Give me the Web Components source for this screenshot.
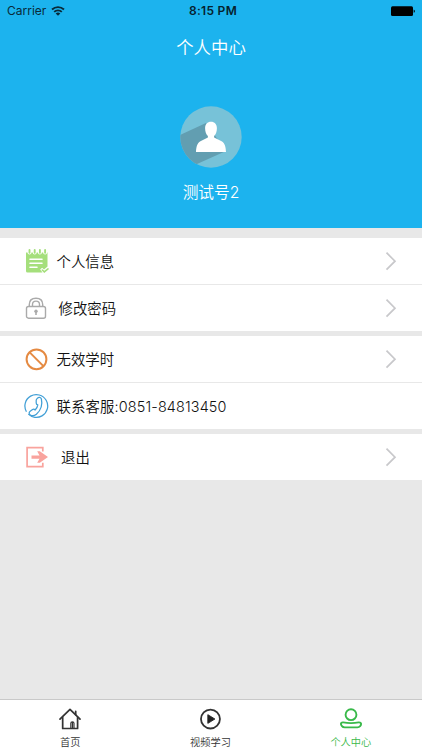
<!DOCTYPE html>
<html lang="zh-CN">
<head>
<meta charset="UTF-8">
<meta name="viewport" content="width=device-width, initial-scale=1.0">
<title>个人中心</title>
<style>
  body {
    margin: 0;
    background: #e8e8e8;
    font-family: Inter, "Noto Sans CJK SC", sans-serif;
    color: #111;
  }
</style>
</head>
<body>
<profile-page></profile-page>

<script>
const icons = {
  note: `<svg width="24" height="26" viewBox="0 0 24 26">
    <path d="M1 4.500h1.500a2 2 0 0 0 4 0h1.200a2 2 0 0 0 4 0h1.200a2 2 0 0 0 4 0h1.200a2 2 0 0 0 4 0h.4v14l-3.500 3-1.900-1.700-1.900 1.700 2.300 3.100H2.500A1.500 1.500 0 0 1 1 23.100z" fill="#a5df7c"/>
    <path d="M4.500 2v2.800M9.700 2v2.800M14.900 2v2.800M20.100 2v2.800" stroke="#a5df7c" stroke-width="1.900" stroke-linecap="round"/>
    <path d="M5 11.300h12M5 15.300h12M5 19.300h7" stroke="#fff" stroke-width="1.600" stroke-linecap="round"/>
    <path d="M17.300 22l2 1.900 3.700-3" fill="none" stroke="#a5df7c" stroke-width="1.600" stroke-linecap="round"/>
  </svg>`,
  lock: `<svg width="24" height="24" viewBox="0 0 24 24" fill="none" stroke="#aaa" stroke-width="1.400">
    <path d="M4.300 10.500V8.500C4.300 4.500 7 2.200 11 2.200s6.700 2.300 6.700 6.300v2"/>
    <path d="M7.500 10.500v-2c0-2.200 1.300-3.400 3.500-3.400s3.500 1.200 3.500 3.400v2"/>
    <rect x="1.500" y="10.500" width="19" height="11.700" rx="2"/>
    <circle cx="11" cy="15.300" r="1.700" fill="#aaa" stroke="none"/>
    <path d="M11 15.500v3.600" stroke-width="1.600"/>
  </svg>`,
  ban: `<svg width="24" height="24" viewBox="0 0 24 24" fill="none" stroke="#e58a42" stroke-width="2">
    <circle cx="11.500" cy="12.300" r="9.900"/><path d="M4.700 5.400l13.700 13.700"/>
  </svg>`,
  phone: `<svg width="26" height="26" viewBox="0 0 26 26" fill="none" stroke="#419fd6" stroke-width="1.250" stroke-linejoin="round">
    <circle cx="13.300" cy="13" r="11.400" stroke-dasharray="68 3.600" transform="rotate(150 13.300 13)"/>
    <path d="M14.500 5.200c1.100-1.300 3.300-1.100 3.900.8 1.200 5.400-.6 11.300-5 15.200-1.900 1.600-4.600 1.900-6.400.5-1.300-1.100-1-2.600.2-3.500l2.300-1.600c1.100-.7 2-.3 2.600.4 1.600-1.500 2.400-3.200 2.700-5.200-1.200-.2-1.600-.9-1.600-1.900V7.200c0-.9.600-1.500 1.300-2z"/>
  </svg>`,
  exit: `<svg width="24" height="24" viewBox="0 0 24 24">
    <path d="M17.800 6.500V2.600H2.100v19h15.700v-3.900" fill="none" stroke="#f9a39d" stroke-width="1.700"/>
    <path d="M6.500 10.500h8l-2.300-4.300h2.600l8.200 5.900-8.200 5.700h-2.600l2.300-4.100h-8z" fill="#f9a39d"/>
  </svg>`,
  home: `<svg width="28" height="26" viewBox="0 0 28 26" fill="none" stroke="#333" stroke-width="1.900" stroke-linejoin="round" stroke-linecap="round">
    <path d="M2.900 13.500L14 2.700l11.100 10.800"/><path d="M5.900 11.500v12.300h16.500V11.500M20.300 8.500V4.800"/>
    <path d="M14.900 23.500v-5.400c0-2.300 3.500-2.300 3.500 0v5.400M16.700 17.500V23" stroke-width="1.300"/>
  </svg>`,
  play: `<svg width="28" height="26" viewBox="0 0 28 26">
    <circle cx="14.500" cy="13.300" r="10.500" fill="none" stroke="#333" stroke-width="2"/>
    <path d="M11.600 8.500v9.600l7.800-4.800z" fill="#222" stroke="#222" stroke-linejoin="round"/>
  </svg>`,
  person: `<svg width="28" height="26" viewBox="0 0 28 26" fill="none" stroke="#39b94a" stroke-width="2.100">
    <circle cx="14" cy="8.500" r="6"/>
    <path d="M5.300 17c5.500 1 11.800 1 17.300 0 3.300-.2 3 2.400 1.500 4.200-.8.900-1.800 1.300-3 1.300H7c-1.200 0-2.300-.4-3-1.300-1.700-1.900-1.700-4.500 1.300-4.200z"/>
  </svg>`
};

class StatusBar extends HTMLElement {
  constructor() {
    super();
    this.attachShadow({ mode: "open" });
  }

  connectedCallback() {
    this.shadowRoot.innerHTML = `
      <style>
        :host {
          display: grid;
          grid-template-columns: 1fr auto 1fr;
          align-items: center;
          height: 22px;
          padding: 0 6px 0 7px;
          font-size: 12px;
          line-height: 22px;
          color: #092a39;
        }
        .network { display: flex; align-items: center; gap: 5px; }
        .time { font-weight: 600; color: #06222f; letter-spacing: .3px; padding-left: 3px; }
        .battery { justify-self: end; display: block; }
      </style>
      <div class="network"><span>Carrier</span>
        <svg width="14" height="10" viewBox="0 0 14 10" fill="none" stroke="#092a39" stroke-width="1.900">
          <path d="M1 3.500c3.500-3.200 8.500-3.200 12 0M3.200 5.900c2.200-2 5.400-2 7.600 0"/>
          <path d="M4.700 7.400c1.300-1.200 3.300-1.200 4.600 0L7 9.800z" fill="#092a39" stroke="none"/>
        </svg>
      </div>
      <span class="time">8:15 PM</span>
      <svg class="battery" width="26" height="11" viewBox="0 0 26 11">
        <rect x="1" y=".2" width="22" height="9.700" rx="1.500"/><path d="M23.700 3.400c1.600.4 1.600 3 0 3.400z"/>
      </svg>
    `;
  }
}

class ProfileHeader extends HTMLElement {
  constructor() {
    super();
    this.attachShadow({ mode: "open" });
  }

  connectedCallback() {
    this.shadowRoot.innerHTML = `
      <style>
        :host {
          display: flex;
          flex-direction: column;
          height: 228px;
          background: #1cb3ee;
          color: #fff;
        }
        h1 {
          margin: 11px 0 0;
          font-size: 17.400px;
          font-weight: 350;
          line-height: 29px;
          text-align: center;
        }
        .avatar { display: block; margin: 44px auto 0; }
        .name {
          margin: 12px 0 0;
          font-size: 15.700px;
          line-height: 26px;
          font-weight: 350;
          text-align: center;
        }
      </style>
      <status-bar></status-bar>
      <h1>${this.getAttribute("heading")}</h1>
      <svg class="avatar" width="62" height="62" viewBox="0 0 62 62">
        <defs><clipPath id="disc"><circle cx="31" cy="31" r="30.700"/></clipPath></defs>
        <g clip-path="url(#disc)">
          <rect width="62" height="62" fill="#77c2d8"/>
          <path d="M0 29l26-12 20 28-29 13L0 62z" fill="#629eb1"/>
        </g>
        <path d="M31 15.700c3.600 0 5.900 2.400 5.900 6.500 0 3.500-1.200 6.300-2.800 7.900v1.500l7.500 3.600c3.300 1.600 4.200 6.100 4.400 10.900H16c.2-4.800 1.100-9.300 4.400-10.900l7.500-3.600v-1.500c-1.600-1.600-2.800-4.400-2.800-7.900 0-4.100 2.300-6.500 5.900-6.500z" fill="#fff"/>
      </svg>
      <p class="name"><slot></slot></p>
    `;
  }
}

class MenuGroup extends HTMLElement {
  constructor() {
    super();
    this.attachShadow({ mode: "open" });
  }

  connectedCallback() {
    this.shadowRoot.innerHTML = `
      <style>
        :host { display: block; background: #fff; }
        ::slotted(:not(:first-child)) { border-top: 1px solid #e8e8e8; }
      </style>
      <slot></slot>
    `;
  }
}

class MenuRow extends HTMLElement {
  constructor() {
    super();
    this.attachShadow({ mode: "open" });
  }

  connectedCallback() {
    const arrow = this.hasAttribute("plain") ? "" : `
      <svg class="arrow" width="12" height="20" viewBox="0 0 12 20">
        <path d="M1.500 1.700L10 10.200l-8.500 8.500" fill="none" stroke="#c8c8cb" stroke-width="1.700"/>
      </svg>`;

    this.shadowRoot.innerHTML = `
      <style>
        :host {
          display: flex;
          align-items: center;
          height: 46px;
          padding: 0 25px;
          font-size: 14.400px;
          font-weight: 350;
        }
        .icon { display: flex; width: 26px; }
        .icon.phone { margin-left: -2px; margin-right: 2px; }
        .icon.phone + .label { letter-spacing: .14px; }
        .label { flex: 1; margin-left: var(--label-gap, 5.500px); padding-top: 2px; line-height: 24px; }
        .arrow { flex: none; }
      </style>
      <span class="icon ${this.getAttribute("icon")}">${icons[this.getAttribute("icon")]}</span>
      <span class="label"><slot></slot></span>
      ${arrow}
    `;
  }
}

class TabItem extends HTMLElement {
  constructor() {
    super();
    this.attachShadow({ mode: "open" });
  }

  connectedCallback() {
    this.shadowRoot.innerHTML = `
      <style>
        :host {
          display: flex;
          flex-direction: column;
          align-items: center;
          flex: 1;
          padding-top: 6.500px;
          font-size: 10.200px;
          font-weight: 350;
          line-height: 16px;
          color: #333;
        }
        :host([active]) { color: #39b94a; }
        svg { display: block; margin-bottom: 4px; }
      </style>
      ${icons[this.getAttribute("icon")]}
      <span><slot></slot></span>
    `;
  }
}

class TabBar extends HTMLElement {
  constructor() {
    super();
    this.attachShadow({ mode: "open" });
  }

  connectedCallback() {
    this.shadowRoot.innerHTML = `
      <style>
        :host {
          display: flex;
          box-sizing: border-box;
          height: 51px;
          padding-right: 1px;
          border-top: 1px solid #c9c9c9;
          background: #fff;
        }
      </style>
      <slot></slot>
    `;
  }
}

class ProfilePage extends HTMLElement {
  constructor() {
    super();
    this.attachShadow({ mode: "open" });
  }

  connectedCallback() {
    this.shadowRoot.innerHTML = `
      <style>
        :host {
          display: flex;
          flex-direction: column;
          height: 100vh;
          min-height: 750px;
        }
        main {
          flex: 1;
          display: flex;
          flex-direction: column;
          gap: 5px;
          padding-top: 10px;
        }
        .wide { --label-gap: 7.500px; }
        .wider { --label-gap: 10px; }
      </style>
      <profile-header heading="个人中心">测试号2</profile-header>
      <main>
        <menu-group>
          <menu-row icon="note">个人信息</menu-row>
          <menu-row icon="lock" class="wide">修改密码</menu-row>
        </menu-group>
        <menu-group>
          <menu-row icon="ban">无效学时</menu-row>
          <menu-row icon="phone" plain>联系客服:0851-84813450</menu-row>
        </menu-group>
        <menu-group>
          <menu-row icon="exit" class="wider">退出</menu-row>
        </menu-group>
      </main>
      <tab-bar>
        <tab-item icon="home">首页</tab-item>
        <tab-item icon="play">视频学习</tab-item>
        <tab-item icon="person" active>个人中心</tab-item>
      </tab-bar>
    `;
  }
}

customElements.define("status-bar", StatusBar);
customElements.define("profile-header", ProfileHeader);
customElements.define("menu-group", MenuGroup);
customElements.define("menu-row", MenuRow);
customElements.define("tab-item", TabItem);
customElements.define("tab-bar", TabBar);
customElements.define("profile-page", ProfilePage);
</script>
</body>
</html>
